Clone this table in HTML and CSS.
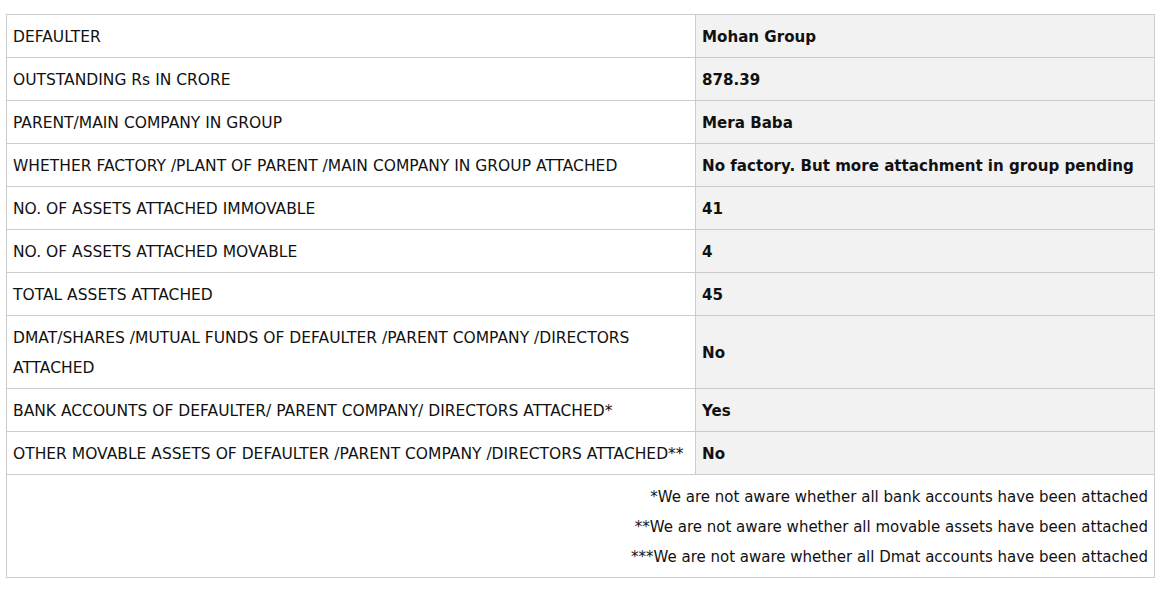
FILE: index.html
```html
<!DOCTYPE html>
<html>
<head>
<meta charset="utf-8">
<link rel="stylesheet" href="styles.css">
</head>
<body>
<table class="info">
  <colgroup><col class="c1"><col class="c2"></colgroup>
  <tbody>
    <tr><td class="k">DEFAULTER</td><td class="v">Mohan Group</td></tr>
    <tr><td class="k">OUTSTANDING Rs IN CRORE</td><td class="v">878.39</td></tr>
    <tr><td class="k">PARENT/MAIN COMPANY IN GROUP</td><td class="v">Mera Baba</td></tr>
    <tr><td class="k">WHETHER FACTORY /PLANT OF PARENT /MAIN COMPANY IN GROUP ATTACHED</td><td class="v">No factory. But more attachment in group pending</td></tr>
    <tr><td class="k">NO. OF ASSETS ATTACHED IMMOVABLE</td><td class="v">41</td></tr>
    <tr><td class="k">NO. OF ASSETS ATTACHED MOVABLE</td><td class="v">4</td></tr>
    <tr><td class="k">TOTAL ASSETS ATTACHED</td><td class="v">45</td></tr>
    <tr><td class="k">DMAT/SHARES /MUTUAL FUNDS OF DEFAULTER /PARENT COMPANY /DIRECTORS ATTACHED</td><td class="v">No</td></tr>
    <tr><td class="k">BANK ACCOUNTS OF DEFAULTER/ PARENT COMPANY/ DIRECTORS ATTACHED*</td><td class="v">Yes</td></tr>
    <tr><td class="k">OTHER MOVABLE ASSETS OF DEFAULTER /PARENT COMPANY /DIRECTORS ATTACHED**</td><td class="v">No</td></tr>
    <tr><td class="notes" colspan="2">*We are not aware whether all bank accounts have been attached<br>**We are not aware whether all movable assets have been attached<br>***We are not aware whether all Dmat accounts have been attached</td></tr>
  </tbody>
</table>
</body>
</html>
```
FILE: styles.css
```css
html, body {
  margin: 0;
  padding: 0;
  background: #fff;
}
body {
  padding: 14px 0 0 6px;
}
.info {
  border-collapse: collapse;
  table-layout: fixed;
  width: 1148px;
  font-family: "DejaVu Sans", sans-serif;
  font-size: 15.5px;
  line-height: 30px;
  color: #111;
}
.c1 { width: 689px; }
.c2 { width: 459px; }
.info td {
  border: 1px solid #cccccc;
  padding: 7px 6px 5px;
  vertical-align: middle;
  text-align: left;
}
.info td.v {
  background: #f2f2f2;
  font-weight: bold;
  font-size: 15.1px;
}
.info td.notes {
  text-align: right;
  font-size: 15px;
}
```
